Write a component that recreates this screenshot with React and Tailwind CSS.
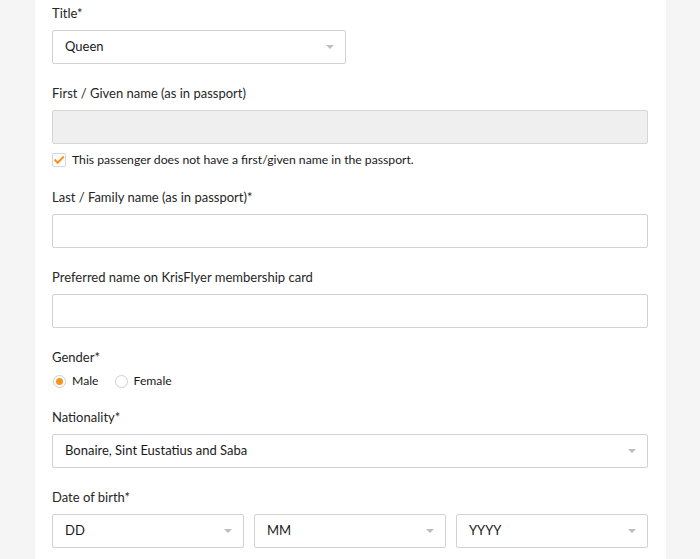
import React, { useState } from 'react';

function Caret() {
  return (
    <svg width="8" height="4" viewBox="0 0 8 4" className="shrink-0">
      <path d="M0 0h8L4 4z" fill="#bdbdbd" />
    </svg>
  );
}

function Label({ children }) {
  return <div className="h-[18px] leading-[18px] text-[13px] text-[#262626]">{children}</div>;
}

function Select({ value, className = '' }) {
  return (
    <div
      className={`h-[34px] mt-2 flex items-center justify-between pl-3 pr-[11px] border border-[#d2d2d2] rounded-[2px] bg-white text-[13px] text-[#1a1a1a] ${className}`}
    >
      <span>{value}</span>
      <Caret />
    </div>
  );
}

function TextInput({ disabled }) {
  return (
    <div
      className={`h-[34px] mt-2 border rounded-[2px] ${
        disabled ? 'bg-[#efefef] border-[#d6d6d6]' : 'bg-white border-[#d2d2d2]'
      }`}
    />
  );
}

function Radio({ checked, label }) {
  return (
    <label className="flex items-center gap-[6px]">
      <span className="w-[13px] h-[13px] rounded-full border border-[#cfcfcf] bg-white flex items-center justify-center">
        {checked && <span className="w-[7px] h-[7px] rounded-full bg-[#f7941d]" />}
      </span>
      <span>{label}</span>
    </label>
  );
}

export default function App() {
  const [noFirstName] = useState(true);

  return (
    <div
      className="min-h-[559px] bg-[#f5f5f5] pl-[35px] pr-[34px]"
      style={{ fontFamily: 'Lato, "Liberation Sans", sans-serif' }}
    >
      <div className="bg-white min-h-[559px] pl-[17px] pr-[18px] pt-1 flex flex-col gap-5">
        <div>
          <Label>Title*</Label>
          <Select value="Queen" className="w-[294px]" />
        </div>

        <div>
          <Label>First / Given name (as in passport)</Label>
          <TextInput disabled />
          <div className="mt-2 h-4 flex items-center gap-[6px] text-[12.2px] text-[#1a1a1a]">
            <span className="w-[14px] h-[14px] border border-[#d6d6d6] rounded-[2px] bg-white flex items-center justify-center">
              {noFirstName && (
                <svg width="12" height="10" viewBox="0 0 12 10">
                  <path d="M1.5 4.5l3.2 3.3L10.8 1.5" fill="none" stroke="#f7941d" strokeWidth="2" />
                </svg>
              )}
            </span>
            <span>This passenger does not have a first/given name in the passport.</span>
          </div>
        </div>

        <div>
          <Label>Last / Family name (as in passport)*</Label>
          <TextInput />
        </div>

        <div>
          <Label>Preferred name on KrisFlyer membership card</Label>
          <TextInput />
        </div>

        <div>
          <Label>Gender*</Label>
          <div className="mt-2 h-[14px] flex items-center gap-[16px] pl-px text-[12.2px] text-[#1a1a1a]">
            <Radio checked label="Male" />
            <Radio label="Female" />
          </div>
        </div>

        <div>
          <Label>Nationality*</Label>
          <Select value="Bonaire, Sint Eustatius and Saba" />
        </div>

        <div>
          <Label>Date of birth*</Label>
          <div className="grid grid-cols-3 gap-[10px]">
            <Select value="DD" />
            <Select value="MM" />
            <Select value="YYYY" />
          </div>
        </div>
      </div>
    </div>
  );
}
